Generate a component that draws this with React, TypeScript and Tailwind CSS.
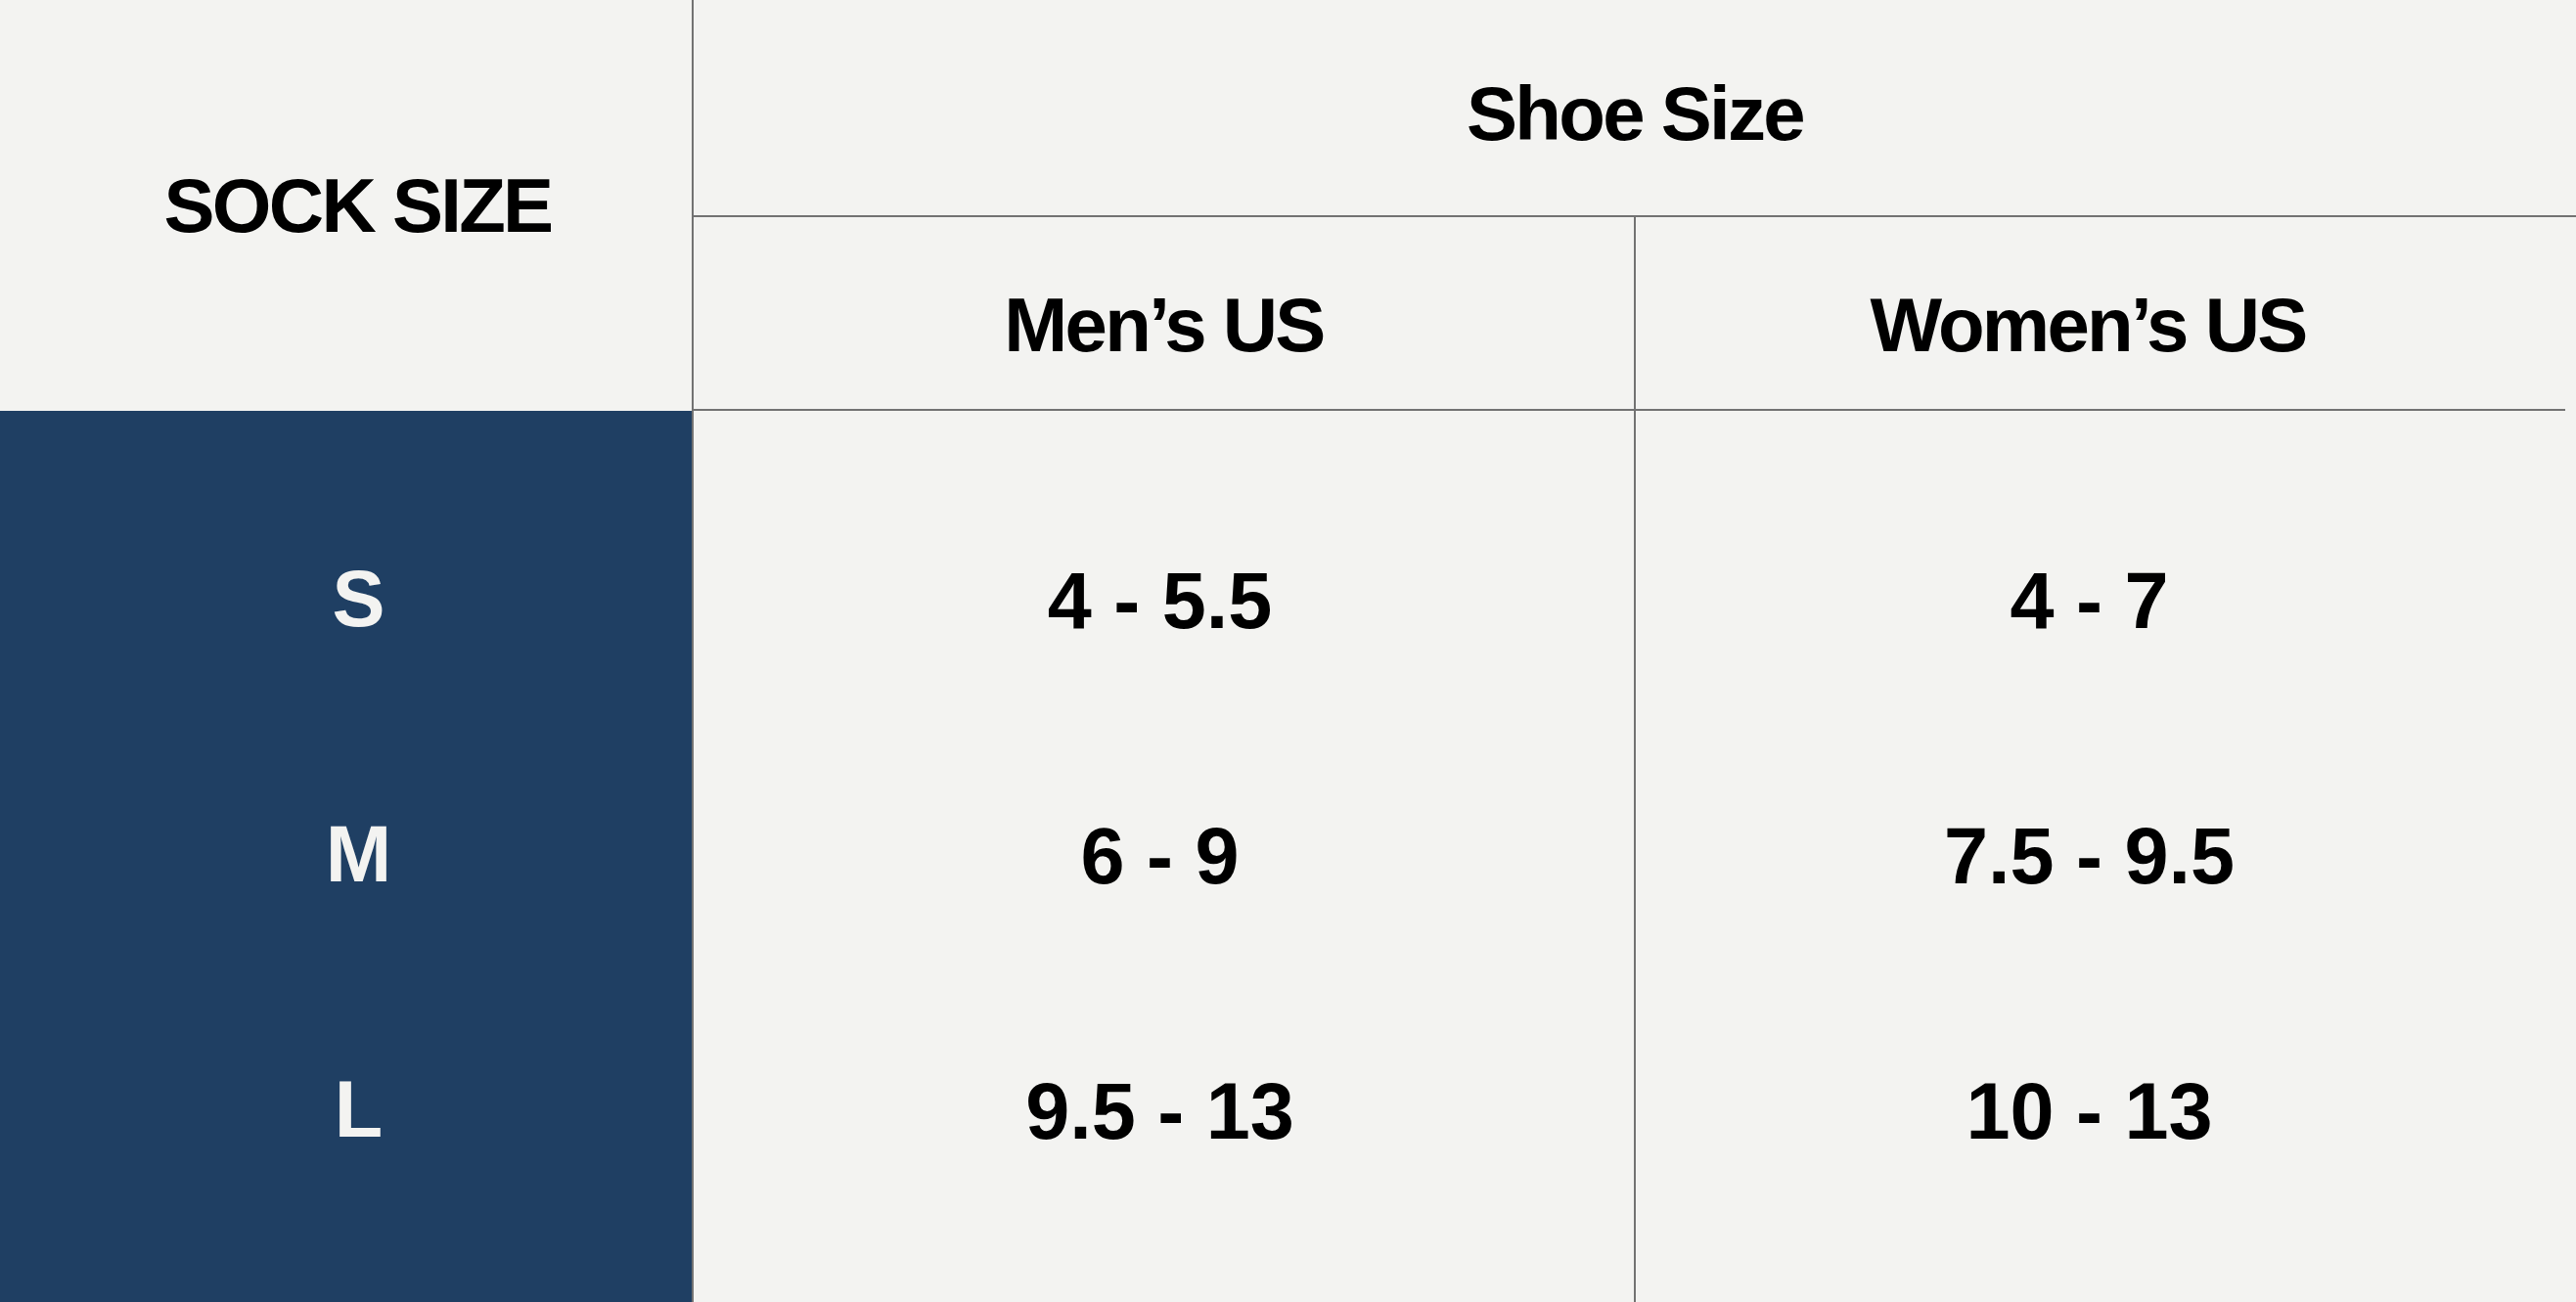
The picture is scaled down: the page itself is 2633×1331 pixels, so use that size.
import React from 'react';

const rows = [
    { sock: 'S', men: '4 - 5.5', women: '4 - 7' },
    { sock: 'M', men: '6 - 9', women: '7.5 - 9.5' },
    { sock: 'L', men: '9.5 - 13', women: '10 - 13' },
];

const App: React.FC = () => {
    return (
        <div className="w-[2633px] h-[1331px] bg-[#f3f3f1] text-black font-['Liberation_Sans',Arial,sans-serif] font-bold text-[81px] leading-none overflow-hidden">
            {/* header */}
            <div className="grid grid-cols-[707px_963px_963px] grid-rows-[222px_198px] text-[78px] tracking-[-0.035em]">
                <div className="row-span-2 flex items-center justify-center pl-[24px]">
                    SOCK SIZE
                </div>
                <div className="col-span-2 flex items-center justify-center pt-[12px] border-l-2 border-b-2 border-[#727272]">
                    Shoe Size
                </div>
                <div className="flex items-center justify-center pt-[24px] border-l-2 border-b-2 border-[#727272]">
                    Men’s US
                </div>
                <div className="flex items-center justify-center pt-[24px] pr-[26px] mr-[11px] border-l-2 border-b-2 border-[#727272]">
                    Women’s US
                </div>
            </div>

            {/* body */}
            <div className="flex h-[911px]">
                <div className="w-[707px] bg-[#1f3f63] text-[#f3f3f1] flex flex-col py-[62px] pl-[26px]">
                    {rows.map((r) => (
                        <div key={r.sock} className="h-[261px] flex items-center justify-center">
                            {r.sock}
                        </div>
                    ))}
                </div>
                <div className="w-[963px] border-l-2 border-[#727272] flex flex-col py-[64px]">
                    {rows.map((r) => (
                        <div key={r.men} className="h-[261px] flex items-center justify-center pr-[8px]">
                            {r.men}
                        </div>
                    ))}
                </div>
                <div className="w-[963px] border-l-2 border-[#727272] flex flex-col py-[64px] pr-[34px]">
                    {rows.map((r) => (
                        <div key={r.women} className="h-[261px] flex items-center justify-center">
                            {r.women}
                        </div>
                    ))}
                </div>
            </div>
        </div>
    );
};

export default App;
